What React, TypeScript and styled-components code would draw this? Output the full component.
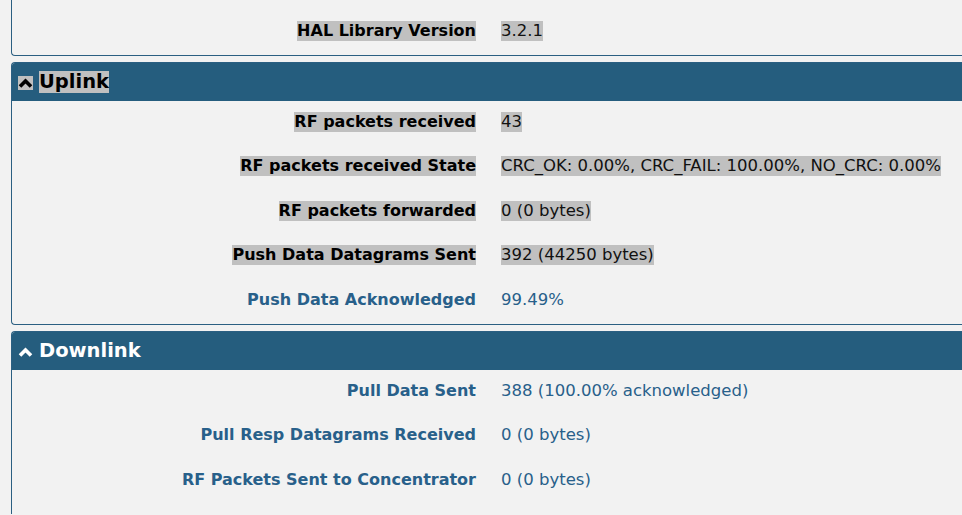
import React from "react";
import styled, { createGlobalStyle } from "styled-components";

const GlobalStyle = createGlobalStyle`
  html, body {
    margin: 0;
    padding: 0;
    background: #f2f2f2;
    overflow: hidden;
  }
  body {
    font-family: "DejaVu Sans", Verdana, sans-serif;
  }
`;

const Page = styled.div`
  display: flex;
  flex-direction: column;
  gap: 6px;
  padding-left: 11px;
`;

const Panel = styled.section<{ $cut?: boolean; $open?: boolean }>`
  border-left: 1px solid #2b5f82;
  border-top: ${(p) => (p.$cut ? "none" : "1px solid #2b5f82")};
  border-bottom: ${(p) => (p.$open ? "none" : "1px solid #2b5f82")};
  border-radius: ${(p) => (p.$cut ? "0 0 0 4px" : p.$open ? "4px 0 0 0" : "4px 0 0 4px")};
  overflow: hidden;
  background: #f2f2f2;
  padding-top: ${(p) => (p.$cut ? "10px" : "0")};
  padding-bottom: ${(p) => (p.$open ? "11px" : "0")};
`;

const Header = styled.header<{ $selected?: boolean }>`
  height: 38px;
  background: #255d7e;
  display: flex;
  align-items: center;
  gap: 6px;
  padding-left: 6px;
  color: ${(p) => (p.$selected ? "#000" : "#fff")};
`;

const ChevronBox = styled.span<{ $selected?: boolean }>`
  display: inline-flex;
  align-items: center;
  justify-content: center;
  width: 15px;
  height: 14px;
  margin-top: 2px;
  background: ${(p) => (p.$selected ? "#c0c0c0" : "transparent")};
`;

const Title = styled.span<{ $selected?: boolean }>`
  display: inline-block;
  font-size: 19.5px;
  font-weight: bold;
  line-height: 22px;
  background: ${(p) => (p.$selected ? "#c0c0c0" : "transparent")};
`;

const Row = styled.div`
  display: grid;
  grid-template-columns: 464px 1fr;
  column-gap: 25px;
  height: 44.6px;
  padding-top: 11px;
  box-sizing: border-box;
  align-items: start;
`;

const Label = styled.span<{ $selected?: boolean }>`
  justify-self: end;
  display: inline-block;
  font-size: 16px;
  font-weight: bold;
  line-height: 20px;
  white-space: nowrap;
  color: ${(p) => (p.$selected ? "#000" : "#28608a")};
  background: ${(p) => (p.$selected ? "#c0c0c0" : "transparent")};
`;

const Value = styled.span<{ $selected?: boolean }>`
  justify-self: start;
  display: inline-block;
  font-size: 16.5px;
  line-height: 20px;
  white-space: nowrap;
  color: ${(p) => (p.$selected ? "#111" : "#28608a")};
  background: ${(p) => (p.$selected ? "#c0c0c0" : "transparent")};
`;

const Chevron: React.FC<{ color: string }> = ({ color }) => (
  <svg width="15" height="14" viewBox="0 0 15 14">
    <polyline
      points="2,10.5 7.5,5 13,10.5"
      fill="none"
      stroke={color}
      strokeWidth="3.6"
      strokeLinecap="butt"
      strokeLinejoin="miter"
    />
  </svg>
);

type Item = { label: string; value: string; selected?: boolean };

const StatRow: React.FC<Item> = ({ label, value, selected }) => (
  <Row>
    <Label $selected={selected}>{label}</Label>
    <Value $selected={selected}>{value}</Value>
  </Row>
);

const uplink: Item[] = [
  { label: "RF packets received", value: "43", selected: true },
  {
    label: "RF packets received State",
    value: "CRC_OK: 0.00%, CRC_FAIL: 100.00%, NO_CRC: 0.00%",
    selected: true,
  },
  { label: "RF packets forwarded", value: "0 (0 bytes)", selected: true },
  { label: "Push Data Datagrams Sent", value: "392 (44250 bytes)", selected: true },
  { label: "Push Data Acknowledged", value: "99.49%" },
];

const downlink: Item[] = [
  { label: "Pull Data Sent", value: "388 (100.00% acknowledged)" },
  { label: "Pull Resp Datagrams Received", value: "0 (0 bytes)" },
  { label: "RF Packets Sent to Concentrator", value: "0 (0 bytes)" },
];

const Section: React.FC<{
  title: string;
  items: Item[];
  selected?: boolean;
  open?: boolean;
}> = ({ title, items, selected, open }) => (
  <Panel $open={open}>
    <Header $selected={selected}>
      <ChevronBox $selected={selected}>
        <Chevron color={selected ? "#000" : "#fff"} />
      </ChevronBox>
      <Title $selected={selected}>{title}</Title>
    </Header>
    {items.map((it) => (
      <StatRow key={it.label} {...it} />
    ))}
  </Panel>
);

export default function App() {
  return (
    <>
      <GlobalStyle />
      <Page>
        <Panel $cut>
          <StatRow label="HAL Library Version" value="3.2.1" selected />
        </Panel>
        <Section title="Uplink" items={uplink} selected />
        <Section title="Downlink" items={downlink} open />
      </Page>
    </>
  );
}
